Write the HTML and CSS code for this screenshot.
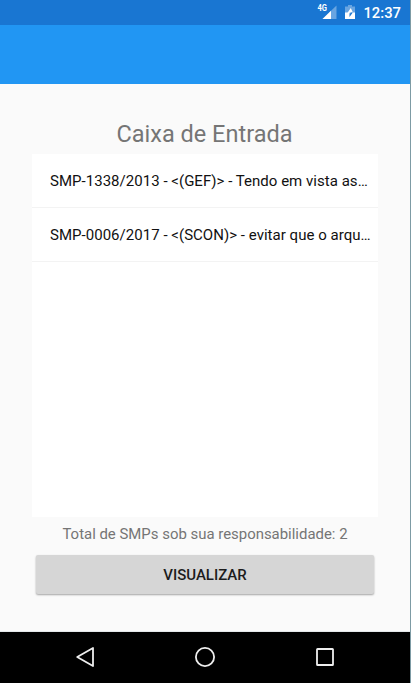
FILE: index.html
```html
<!DOCTYPE html>
<html lang="pt-BR">
<head>
<meta charset="utf-8">
<title>Caixa de Entrada</title>
<link rel="stylesheet" href="styles.css">
</head>
<body>
<div class="screen">
  <div class="status">
    <svg class="signal" width="21" height="18" viewBox="0 0 21 18">
      <path d="M19.5 2.5V16H5.5z" fill="#fff" fill-opacity=".35"/>
      <path d="M14 7.8V16H5.5z" fill="#fff"/>
      <text class="net" x="0.5" y="8" textLength="9.5" lengthAdjust="spacingAndGlyphs">4G</text>
    </svg>
    <svg class="battery" width="10" height="16" viewBox="0 0 10 16">
      <path d="M0 2.5H3V1H7V2.5H10V15H0z" fill="#fff" fill-opacity=".35"/>
      <path d="M0 8.5H10V15H0z" fill="#fff"/>
      <path d="M5.8 4 2.2 9.2H4.5V8.5H7.9z" fill="#fff"/>
      <path d="M4.5 9.2V13L7.8 8.5H5.6V9.2z" fill="#1976d2"/>
    </svg>
    <span class="clock">12:37</span>
  </div>
  <header class="appbar"></header>
  <main class="content">
    <h1 class="title">Caixa de Entrada</h1>
    <ul class="list">
      <li class="item"><span class="item-text">SMP-1338/2013 - &lt;(GEF)&gt; - Tendo em vista as…</span></li>
      <li class="item"><span class="item-text">SMP-0006/2017 - &lt;(SCON)&gt; - evitar que o arqu…</span></li>
    </ul>
    <p class="total">Total de SMPs sob sua responsabilidade: 2</p>
    <button class="view">VISUALIZAR</button>
  </main>
  <nav class="nav">
    <svg width="20" height="22" viewBox="0 0 20 22"><path d="M18 2V20L2.2 11z" fill="none" stroke="#eee" stroke-width="1.8" stroke-linejoin="round"/></svg>
    <svg width="22" height="22" viewBox="0 0 22 22"><circle cx="11" cy="11" r="9.1" fill="none" stroke="#eee" stroke-width="1.8"/></svg>
    <svg width="20" height="22" viewBox="0 0 20 22"><rect x="2" y="3" width="16" height="16" rx=".6" fill="none" stroke="#eee" stroke-width="1.8"/></svg>
  </nav>
</div>
</body>
</html>
```
FILE: styles.css
```css
* { box-sizing: border-box; }
body { margin: 0; font-family: Roboto, sans-serif; background: #fafafa; }
.screen {
  width: 411px;
  height: 683px;
  display: flex;
  flex-direction: column;
  border-right: 1px solid #7d9ba4;
  overflow: hidden;
}
.status {
  height: 25px;
  flex: none;
  background: #1976d2;
  color: #fff;
  display: flex;
  justify-content: flex-end;
  padding-right: 9px;
}
.signal { margin: 3px 7px 0 0; }
.net { font-size: 9px; font-weight: 700; fill: #fff; }
.battery { margin: 4px 8px 0 0; }
.clock { font-size: 14.8px; font-weight: 500; line-height: 26px; white-space: nowrap; }
.appbar { height: 59px; flex: none; background: #2196f3; }
.content {
  flex: 1;
  padding: 36px 32px 0;
  display: flex;
  flex-direction: column;
  border-bottom: 1px solid #e4e8ea;
}
.title {
  margin: 0;
  height: 34px;
  line-height: 28px;
  font-size: 23.5px;
  font-weight: 400;
  color: #757575;
  text-align: center;
  white-space: nowrap;
  padding-right: 1px;
}
.list {
  margin: 0;
  padding: 0;
  height: 363px;
  background: #fff;
  list-style: none;
  flex: none;
}
.item {
  height: 54px;
  display: flex;
  align-items: center;
  padding-left: 18px;
  border-bottom: 1px solid #f3f3f3;
}
.item-text { font-size: 15px; letter-spacing: .03px; color: #111; white-space: nowrap; }
.total {
  margin: 0;
  height: 38px;
  line-height: 34px;
  font-size: 14.93px;
  color: #757575;
  text-align: center;
  white-space: nowrap;
}
.view {
  margin: 0 4px;
  height: 39px;
  flex: none;
  border: 0;
  border-radius: 2px;
  background: #d6d6d6;
  box-shadow: 0 1px 2px rgba(0, 0, 0, .35);
  font: 500 15px Roboto, sans-serif;
  color: #1c1c1c;
}
.nav {
  height: 51px;
  flex: none;
  background: #000;
  display: flex;
  justify-content: space-between;
  align-items: center;
  padding: 0 75px 1px;
}
```
